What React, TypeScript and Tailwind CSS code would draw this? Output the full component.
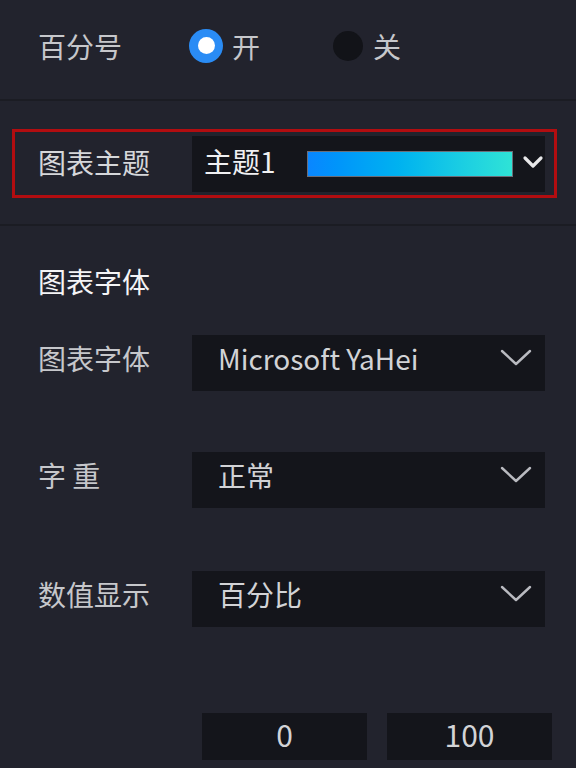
import React from 'react';

const FONT = "font-['Microsoft_YaHei','Noto_Sans_CJK_SC',sans-serif]";

function Chevron({ big }: { big?: boolean }) {
  if (big) {
    return (
      <svg width="32" height="18" viewBox="0 0 32 18" fill="none">
        <polyline points="2,2 16,15 30,2" stroke="#b9bac0" strokeWidth="2.4" strokeLinecap="round" strokeLinejoin="round" />
      </svg>
    );
  }
  return (
    <svg width="22" height="14" viewBox="0 0 22 14" fill="none">
      <polyline points="3,3 11,11 19,3" stroke="#e8e8ea" strokeWidth="3.2" strokeLinecap="round" strokeLinejoin="round" />
    </svg>
  );
}

function SelectRow({ label, value, className = '' }: { label: string; value: string; className?: string }) {
  return (
    <div className={`flex items-center pl-[38px] ${className}`}>
      <span className="w-[154px] text-[28px] leading-[28px] text-[#c6c7cb] pb-[10px] whitespace-pre">{label}</span>
      <div className="w-[353px] h-[56px] bg-[#14151b] flex items-center pl-[26px] pr-[13px] pb-[10px]">
        <span className="flex-1 text-[28px] leading-[28px] text-[#d2d3d6]">{value}</span>
        <Chevron big />
      </div>
    </div>
  );
}

export default function App() {
  return (
    <div className={`w-[576px] h-[768px] bg-[#22232d] overflow-hidden ${FONT}`}>
      {/* 百分号 */}
      <div className="h-[99px] flex items-center pl-[38px] pb-[8px]">
        <span className="w-[151px] text-[28px] leading-[28px] text-[#c6c7cb]">百分号</span>
        <span className="w-[34px] h-[34px] rounded-full bg-[#2a8cf5] flex items-center justify-center">
          <span className="w-[17px] h-[17px] rounded-full bg-white" />
        </span>
        <span className="ml-[9px] text-[28px] leading-[28px] text-[#c6c7cb]">开</span>
        <span className="ml-[73px] w-[30px] h-[30px] rounded-full bg-[#121318]" />
        <span className="ml-[10px] text-[28px] leading-[28px] text-[#c6c7cb]">关</span>
      </div>
      <div className="h-[2px] bg-[#1b1c23]" />

      {/* 图表主题 */}
      <div className="pt-[28px] pl-[12px]">
        <div className="w-[545px] h-[69px] border-[3px] border-[#b20d10] flex items-center pl-[23px]">
          <span className="w-[154px] text-[28px] leading-[28px] text-[#d6d7da] pb-[4px]">图表主题</span>
          <div className="w-[353px] h-[56px] bg-[#14151b] flex items-center pl-[12px]">
            <span className="w-[103px] text-[28px] leading-[28px] text-[#f0f0f2] pb-[6px]">主题1</span>
            <div className="w-[206px] h-[26px] border border-[#6b6d78] bg-gradient-to-r from-[#0a86ff] to-[#2fe3d6]" />
            <span className="ml-[9px] pb-[4px]">
              <Chevron />
            </span>
          </div>
        </div>
      </div>
      <div className="mt-[26px] h-[2px] bg-[#1b1c23]" />

      {/* 图表字体 */}
      <div className="pt-[41px] pl-[38px] text-[28px] leading-[28px] text-[#f4f4f6]">图表字体</div>
      <SelectRow label="图表字体" value="Microsoft YaHei" className="mt-[40px]" />
      <SelectRow label="字 重" value="正常" className="mt-[61px]" />
      <SelectRow label="数值显示" value="百分比" className="mt-[63px]" />

      <div className="mt-[86px] ml-[202px] flex gap-[20px]">
        <div className="w-[165px] h-[47px] bg-[#14151b] flex items-center justify-center text-[30px] leading-[30px] text-[#d2d3d6] pb-[6px]">0</div>
        <div className="w-[165px] h-[47px] bg-[#14151b] flex items-center justify-center text-[30px] leading-[30px] text-[#d2d3d6] pb-[6px]">100</div>
      </div>
    </div>
  );
}
